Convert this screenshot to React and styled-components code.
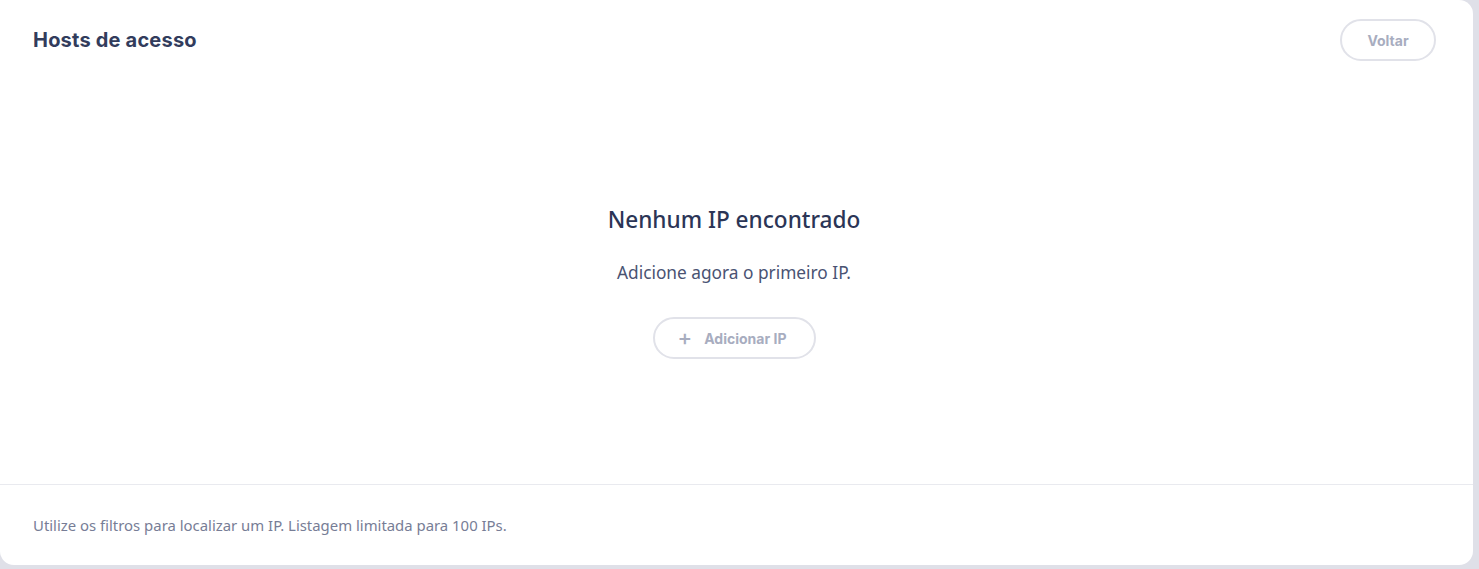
import React from "react";
import styled, { createGlobalStyle } from "styled-components";

const Global = createGlobalStyle`
  html, body {
    margin: 0;
    padding: 0;
    background: #dfe0e8;
  }
  * { box-sizing: border-box; }
`;

const App = () => {
  return (
    <>
      <Global />
      <Page>
        <Card>
          <Header>
            <Title>Hosts de acesso</Title>
            <PillButton>Voltar</PillButton>
          </Header>
          <Body>
            <EmptyTitle>Nenhum IP encontrado</EmptyTitle>
            <EmptyText>Adicione agora o primeiro IP.</EmptyText>
            <PillButton wide>
              <Plus>+</Plus>
              Adicionar IP
            </PillButton>
          </Body>
          <Footer>
            <FooterText>
              Utilize os filtros para localizar um IP. Listagem limitada para 100 IPs.
            </FooterText>
          </Footer>
        </Card>
      </Page>
    </>
  );
};

export default App;

const Page = styled.div`
  width: 1479px;
  height: 569px;
  padding: 0 6px 4px 0;
`;

const Card = styled.div`
  background: #fff;
  height: 565px;
  border-radius: 0 14px 14px 14px;
  display: flex;
  flex-direction: column;
`;

const Header = styled.div`
  height: 80px;
  display: flex;
  justify-content: space-between;
  align-items: center;
  padding: 0 37px 0 33px;
`;

const Title = styled.h1`
  margin: 0;
  font-family: "Inter", "Liberation Sans", sans-serif;
  font-weight: 700;
  font-size: 20px;
  color: #323c5c;
  letter-spacing: 0.2px;
`;

const PillButton = styled.button`
  display: flex;
  align-items: center;
  justify-content: center;
  gap: 12px;
  height: 42px;
  width: ${({ wide }) => (wide ? "163px" : "96px")};
  border: 2px solid #e1e2e9;
  border-radius: 21px;
  background: #fff;
  color: #a8adbf;
  font-family: "Inter", "Liberation Sans", sans-serif;
  font-weight: 700;
  font-size: 14px;
  padding: ${({ wide }) => (wide ? "0 4px 0 0" : "0")};
  cursor: pointer;
`;

const Plus = styled.span`
  font-size: 22px;
  font-weight: 500;
  line-height: 1;
  margin-top: -3px;
`;

const Body = styled.div`
  flex: 1;
  display: flex;
  flex-direction: column;
  align-items: center;
  justify-content: center;
  padding-right: 5px;
`;

const EmptyTitle = styled.h2`
  margin: 0;
  font-family: "Noto Sans", sans-serif;
  font-weight: 500;
  font-size: 22.6px;
  line-height: 30px;
  color: #2b3556;
`;

const EmptyText = styled.p`
  margin: 26px 0 32px;
  font-family: "Noto Sans", sans-serif;
  font-size: 17.3px;
  line-height: 24px;
  color: #4a5373;
`;

const Footer = styled.div`
  height: 81px;
  border-top: 1px solid #e9eaef;
  display: flex;
  align-items: center;
  padding: 0 33px;
`;

const FooterText = styled.span`
  font-family: "Noto Sans", sans-serif;
  font-size: 14.9px;
  color: #777d96;
`;
